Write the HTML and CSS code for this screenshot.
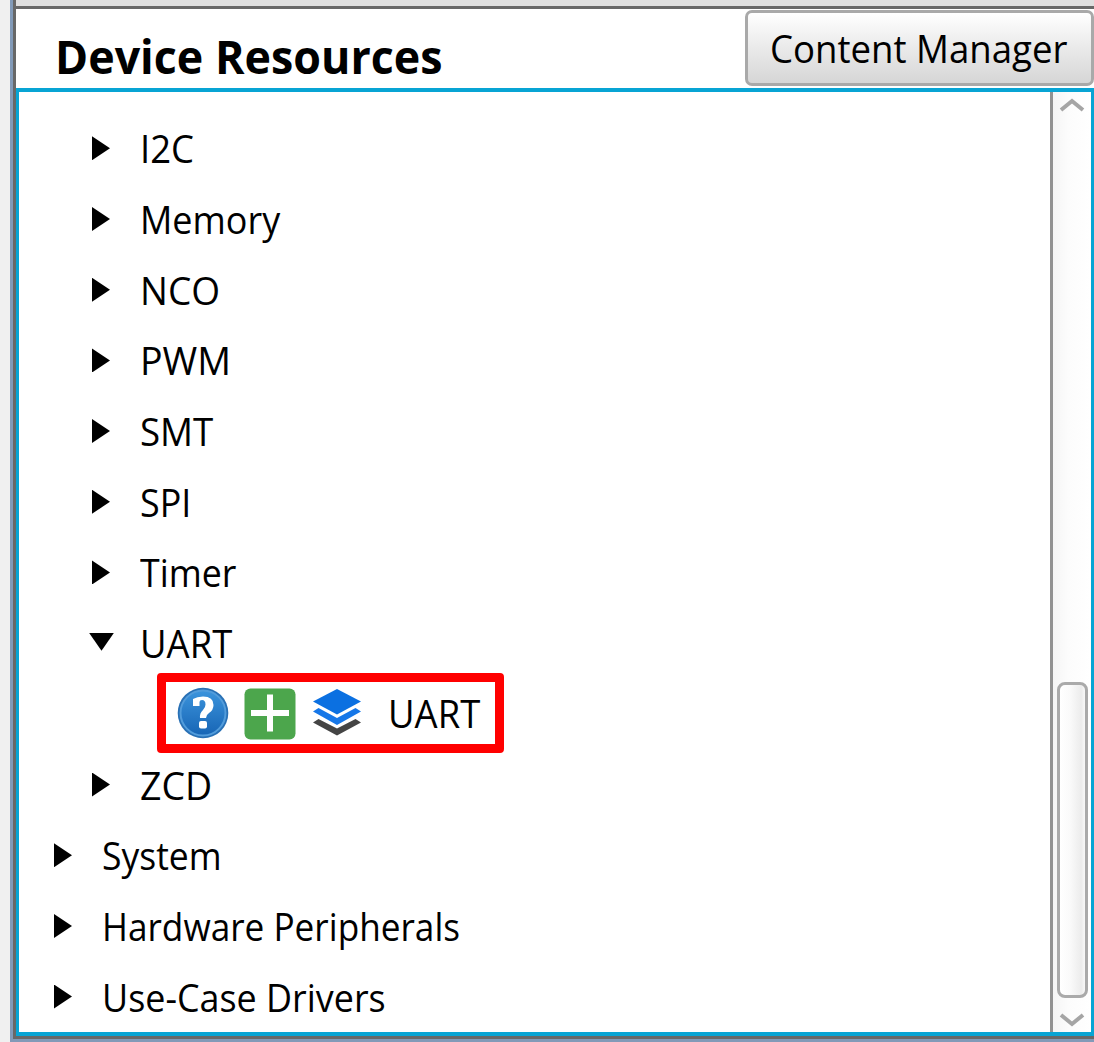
FILE: index.html
```html
<!DOCTYPE html>
<html lang="en">
<head>
<meta charset="utf-8">
<title>Device Resources</title>
<link rel="stylesheet" href="styles.css">
</head>
<body>
<div class="window">
  <div class="topbar"></div>
  <header class="header">
    <h1 class="title"><span class="label" style="--sx:.974">Device Resources</span></h1>
    <button class="manager"><span class="label" style="--sx:.938">Content Manager</span></button>
  </header>
  <main class="panel">
    <ul class="tree">
      <li class="row child"><i class="arrow"></i><span class="label" style="--sx:.935">I2C</span></li>
      <li class="row child"><i class="arrow"></i><span class="label" style="--sx:.922">Memory</span></li>
      <li class="row child"><i class="arrow"></i><span class="label" style="--sx:.95">NCO</span></li>
      <li class="row child"><i class="arrow"></i><span class="label" style="--sx:.963">PWM</span></li>
      <li class="row child"><i class="arrow"></i><span class="label" style="--sx:.94">SMT</span></li>
      <li class="row child"><i class="arrow"></i><span class="label" style="--sx:.92">SPI</span></li>
      <li class="row child"><i class="arrow"></i><span class="label" style="--sx:.915">Timer</span></li>
      <li class="row child"><i class="arrow open"></i><span class="label" style="--sx:.935">UART</span></li>
      <li class="row leaf">
        <div class="highlight">
          <svg class="icon help" viewBox="0 0 52 52">
            <defs><linearGradient id="blue" x2="0" y2="1"><stop stop-color="#3c94dc"/><stop offset="1" stop-color="#1765b5"/></linearGradient></defs>
            <circle cx="26" cy="26" r="25.3" fill="#2870b5"/>
            <circle cx="26" cy="26" r="22.5" fill="url(#blue)" stroke="#529cdb" stroke-width="2"/>
            <path d="M16 19V12Q20 9.500 26 9.500Q36.500 9.500 36.500 18Q36.500 23 32 26Q29 28 29 31H23Q22.500 26 26 23Q28.500 20.500 28.500 17.500Q28.500 13 25 13Q22.500 13 22.500 15V19Z" fill="#fff"/>
            <rect x="22" y="34" width="8" height="7.500" rx="2" fill="#fff"/>
          </svg>
          <svg class="icon add" viewBox="0 0 52 52">
            <rect x=".5" y=".5" width="51" height="51" rx="6" fill="#4ca64c"/>
            <path d="M26 6.500V43.500M7 25H45" stroke="#fff" stroke-width="6"/>
          </svg>
          <svg class="icon layers" viewBox="0 0 52 52">
            <path d="M2 35.500L7.500 32L26 41.500L44.500 32L50 35.500L26 48.500Z" fill="#444"/>
            <path d="M2 24.500L7.500 21L26 31L44.500 21L50 24.500L26 38Z" fill="#1677e8"/>
            <path d="M26 2L50 14.500L26 27.500L2 14.500Z" fill="#0b70e1"/>
          </svg>
          <span class="label" style="--sx:.935">UART</span>
        </div>
      </li>
      <li class="row child"><i class="arrow"></i><span class="label" style="--sx:.96">ZCD</span></li>
      <li class="row"><i class="arrow"></i><span class="label" style="--sx:.91">System</span></li>
      <li class="row"><i class="arrow"></i><span class="label" style="--sx:.902">Hardware Peripherals</span></li>
      <li class="row"><i class="arrow"></i><span class="label" style="--sx:.92">Use-Case Drivers</span></li>
    </ul>
    <div class="scrollbar">
      <svg class="chevron" viewBox="0 0 26 14"><path d="M2 12L13 3L24 12"/></svg>
      <div class="thumb"></div>
      <svg class="chevron" viewBox="0 0 26 14"><path d="M2 2L13 11L24 2"/></svg>
    </div>
  </main>
</div>
</body>
</html>
```
FILE: styles.css
```css
* { box-sizing: border-box; }
body {
  margin: 0;
  height: 1042px;
  padding-left: 10px;
  overflow: hidden;
  background: #f0f0f0;
  color: #000;
  font-family: "Open Sans", "Noto Sans", sans-serif;
}
.window {
  height: 1042px;
  display: flex;
  flex-direction: column;
  border-left: 3px solid #829ab8;
  border-bottom: 3px solid #829ab8;
  background: #686868;
  padding: 0 0 3px 3px;
}
.topbar {
  height: 9px;
  flex: none;
  background: #dfdfdf;
  border-bottom: 3px solid #686868;
}
.header {
  height: 79px;
  flex: none;
  display: flex;
  justify-content: space-between;
  background: #fff;
}
.label {
  display: inline-block;
  white-space: nowrap;
  transform: scaleX(var(--sx));
  transform-origin: left center;
}
.title {
  margin: 0;
  padding: 15px 0 0 39px;
  font-size: 46px;
  line-height: 64px;
  font-weight: 700;
}
.manager {
  width: 349px;
  height: 76px;
  margin-top: 1px;
  padding: 0 0 0 22px;
  border: 3px solid #a9a9a9;
  border-radius: 7px;
  background: linear-gradient(#fff, #f0f0f0 35%, #d6d6d6);
  font: 39px/68px "Open Sans", "Noto Sans", sans-serif;
  color: #000;
  text-align: left;
}
.panel {
  flex: 1;
  min-height: 0;
  display: flex;
  border: 4px solid #08a4d4;
  border-left-width: 3px;
  border-right-width: 3px;
  background: #fff;
}
.tree {
  flex: 1;
  margin: 0;
  padding: 21px 0 0 35px;
  list-style: none;
}
.row {
  height: 70.7px;
  display: flex;
  align-items: center;
  font-size: 39px;
  line-height: 50px;
}
.child { padding-left: 38px; }
.leaf { padding-left: 103px; }
.arrow {
  width: 18px;
  height: 24px;
  margin-right: 30px;
  flex: none;
  background: #000;
  clip-path: polygon(0 0, 100% 50%, 0 100%);
}
.arrow.open {
  width: 25px;
  height: 18px;
  margin: -3px 26px 0 -3px;
  clip-path: polygon(0 0, 100% 0, 50% 100%);
}
.highlight {
  width: 347px;
  height: 80px;
  flex: none;
  display: flex;
  align-items: center;
  margin-top: -1px;
  padding-left: 11px;
  border: 9px solid #f00;
  border-radius: 4px;
}
.icon { width: 52px; height: 52px; flex: none; }
.add { margin: 2px 0 0 15px; }
.layers { margin: 0 25px 0 15px; }
.scrollbar {
  width: 41px;
  flex: none;
  display: flex;
  flex-direction: column;
  align-items: center;
  padding: 6px 0 5px;
  border-left: 3px solid #929292;
  background: linear-gradient(90deg, #f5f5f5, #fcfcfc 40%, #fff);
}
.chevron {
  width: 26px;
  height: 14px;
  flex: none;
  fill: none;
  stroke: #a5a5a5;
  stroke-width: 4;
}
.thumb {
  width: 31px;
  height: 316px;
  margin: auto 0 15px;
  border: 3px solid #aaa;
  border-radius: 8px;
  background: linear-gradient(90deg, #fff, #fafafa 40%, #ececec 85%, #f8f8f8);
}
```
